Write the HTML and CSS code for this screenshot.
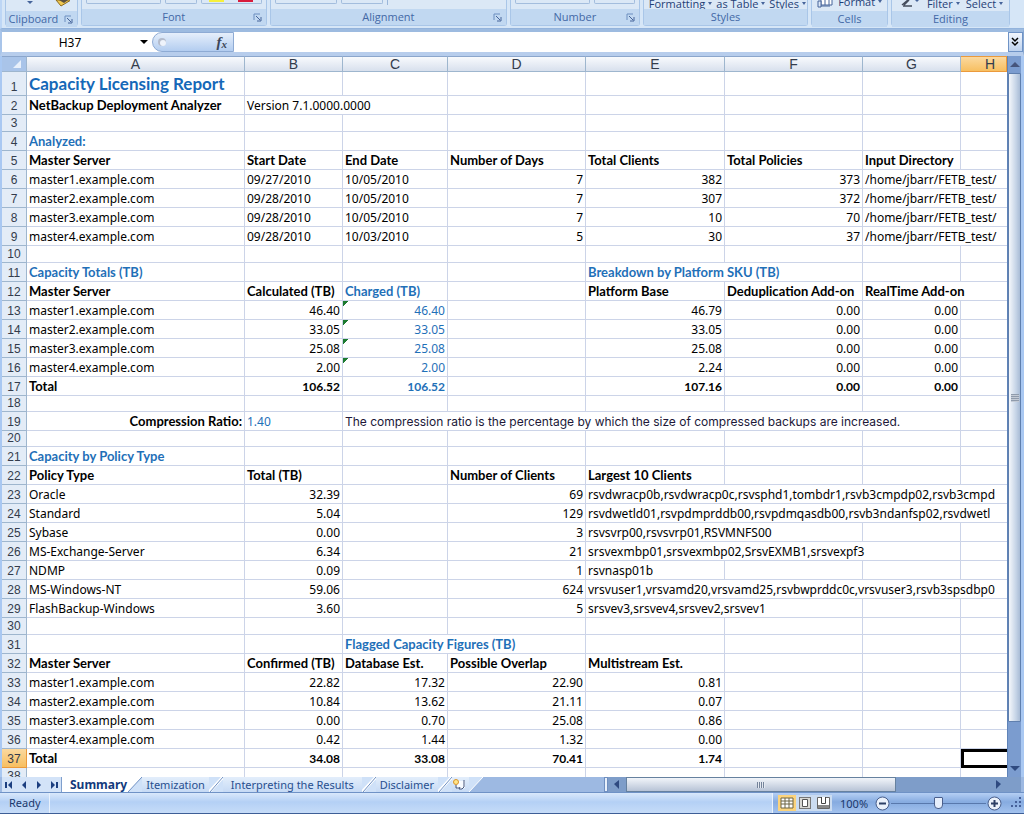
FILE: index.html
```html
<!DOCTYPE html>
<html lang="en">
<head>
<meta charset="utf-8">
<title>Capacity Licensing Report</title>
<link rel="stylesheet" href="styles.css">
</head>
<body>
<div class="app">
  <header class="ribbon">
    <section class="group clipboard">
      <div class="tools">
        <svg width="60" height="11" viewBox="0 0 60 11"><path d="M17 1h6l-3 3z" fill="#46649a"/><path d="M46 0l5 6 10-6z" fill="#f0c850" stroke="#8a6a20"/><path d="M49 0l5 3 4-3z" fill="#5a5040"/></svg>
      </div>
      <h2>Clipboard<button class="launch" aria-label="Clipboard options"><svg width="9" height="9"><path d="M1 7V1h6" fill="none" stroke="#6d8fc0"/><path d="M3 3l4 4M8 4v4H4" fill="none" stroke="#46649a"/></svg></button></h2>
    </section>
    <section class="group font">
      <div class="tools"><span class="box w76"></span><span class="box w32"></span><span class="box w62"><i class="swatch yellow"></i><i class="swatch red"></i></span></div>
      <h2>Font<button class="launch" aria-label="Font options"><svg width="9" height="9"><path d="M1 7V1h6" fill="none" stroke="#6d8fc0"/><path d="M3 3l4 4M8 4v4H4" fill="none" stroke="#46649a"/></svg></button></h2>
    </section>
    <section class="group alignment">
      <div class="tools"><span class="box w62"></span><span class="box w42"></span><span class="rule"></span></div>
      <h2>Alignment<button class="launch" aria-label="Alignment options"><svg width="9" height="9"><path d="M1 7V1h6" fill="none" stroke="#6d8fc0"/><path d="M3 3l4 4M8 4v4H4" fill="none" stroke="#46649a"/></svg></button></h2>
    </section>
    <section class="group number">
      <div class="tools"><span class="box w76"></span><span class="box w42"></span></div>
      <h2>Number<button class="launch" aria-label="Number options"><svg width="9" height="9"><path d="M1 7V1h6" fill="none" stroke="#6d8fc0"/><path d="M3 3l4 4M8 4v4H4" fill="none" stroke="#46649a"/></svg></button></h2>
    </section>
    <section class="group styles">
      <div class="tools"><button class="drop">Formatting</button><button class="drop">as Table</button><button class="drop">Styles</button></div>
      <h2>Styles</h2>
    </section>
    <section class="group cells">
      <div class="tools"><svg width="17" height="11" viewBox="0 0 17 11"><path d="M4 0v5h11V0M8 0v5M12 0v5" fill="#fff" stroke="#46649a"/><path d="M1 1h3v6H1zM4 6h9" fill="#dce8f8" stroke="#46649a"/></svg><button class="drop">Format</button></div>
      <h2>Cells</h2>
    </section>
    <section class="group editing">
      <div class="tools"><svg width="24" height="11" viewBox="0 0 24 11"><path d="M5 5l6-5M6 6h9M7 5l5-5" fill="none" stroke="#444c5c" stroke-width="1.5"/><path d="M18 0h4l-2 2z" fill="#46649a"/></svg><button class="drop">Filter</button><button class="drop">Select</button></div>
      <h2>Editing</h2>
    </section>
  </header>

  <div class="formula-bar">
    <input class="name-box" aria-label="Name box" value="H37">
    <button class="name-drop" aria-label="Open name list"><svg width="8" height="4"><path d="M0 0h8L4 4z" fill="#000"/></svg></button>
    <div class="fx">
      <svg width="12" height="12"><circle cx="5" cy="6" r="4" fill="#b4bccc"/><circle cx="6" cy="7" r="3" fill="#eef3fb"/></svg>
      <button class="fx-button" aria-label="Insert function">f<small>x</small></button>
    </div>
    <input class="formula" aria-label="Formula" value="">
    <button class="expand" aria-label="Expand formula bar"><svg width="9" height="10"><path d="M1 1l3 3 3-3M1 5l3 3 3-3" fill="none" stroke="#000" stroke-width="1.5"/></svg></button>
  </div>

  <main class="workspace">
    <div class="sheet">
      <table>
        <colgroup><col class="c-row"><col class="c-a"><col class="c-b"><col class="c-c"><col class="c-d"><col class="c-e"><col class="c-f"><col class="c-g"><col></colgroup>
        <thead><tr><th class="corner"><svg width="8" height="8"><path d="M8 0v8H0z" fill="#e8f0fb"/></svg></th><th>A</th><th>B</th><th>C</th><th>D</th><th>E</th><th>F</th><th>G</th><th class="current col-h">H</th></tr></thead>
        <tbody>
          <tr class="tall"><th>1</th><td class="title">Capacity Licensing Report</td><td></td><td></td><td></td><td></td><td></td><td></td><td></td></tr>
          <tr><th>2</th><td class="b">NetBackup Deployment Analyzer</td><td colspan="2">Version 7.1.0000.0000</td><td></td><td></td><td></td><td></td><td></td></tr>
          <tr class="short"><th>3</th><td></td><td></td><td></td><td></td><td></td><td></td><td></td><td></td></tr>
          <tr><th>4</th><td class="b blue">Analyzed:</td><td></td><td></td><td></td><td></td><td></td><td></td><td></td></tr>
          <tr class="b"><th>5</th><td>Master Server</td><td>Start Date</td><td>End Date</td><td>Number of Days</td><td>Total Clients</td><td>Total Policies</td><td>Input Directory</td><td></td></tr>
          <tr><th>6</th><td>master1.example.com</td><td>09/27/2010</td><td>10/05/2010</td><td class="n">7</td><td class="n">382</td><td class="n">373</td><td colspan="2">/home/jbarr/FETB_test/</td></tr>
          <tr><th>7</th><td>master2.example.com</td><td>09/28/2010</td><td>10/05/2010</td><td class="n">7</td><td class="n">307</td><td class="n">372</td><td colspan="2">/home/jbarr/FETB_test/</td></tr>
          <tr><th>8</th><td>master3.example.com</td><td>09/28/2010</td><td>10/05/2010</td><td class="n">7</td><td class="n">10</td><td class="n">70</td><td colspan="2">/home/jbarr/FETB_test/</td></tr>
          <tr><th>9</th><td>master4.example.com</td><td>09/28/2010</td><td>10/03/2010</td><td class="n">5</td><td class="n">30</td><td class="n">37</td><td colspan="2">/home/jbarr/FETB_test/</td></tr>
          <tr class="short"><th>10</th><td></td><td></td><td></td><td></td><td></td><td></td><td></td><td></td></tr>
          <tr class="b blue"><th>11</th><td>Capacity Totals (TB)</td><td></td><td></td><td></td><td colspan="2">Breakdown by Platform SKU (TB)</td><td></td><td></td></tr>
          <tr class="b"><th>12</th><td>Master Server</td><td>Calculated (TB)</td><td class="blue">Charged (TB)</td><td></td><td>Platform Base</td><td>Deduplication Add-on</td><td colspan="2">RealTime Add-on</td></tr>
          <tr><th>13</th><td>master1.example.com</td><td class="n">46.40</td><td class="n blue flag">46.40</td><td></td><td class="n">46.79</td><td class="n">0.00</td><td class="n">0.00</td><td></td></tr>
          <tr><th>14</th><td>master2.example.com</td><td class="n">33.05</td><td class="n blue flag">33.05</td><td></td><td class="n">33.05</td><td class="n">0.00</td><td class="n">0.00</td><td></td></tr>
          <tr><th>15</th><td>master3.example.com</td><td class="n">25.08</td><td class="n blue flag">25.08</td><td></td><td class="n">25.08</td><td class="n">0.00</td><td class="n">0.00</td><td></td></tr>
          <tr><th>16</th><td>master4.example.com</td><td class="n">2.00</td><td class="n blue flag">2.00</td><td></td><td class="n">2.24</td><td class="n">0.00</td><td class="n">0.00</td><td></td></tr>
          <tr class="b"><th>17</th><td>Total</td><td class="n">106.52</td><td class="n blue">106.52</td><td></td><td class="n">107.16</td><td class="n">0.00</td><td class="n">0.00</td><td></td></tr>
          <tr class="shorter"><th>18</th><td></td><td></td><td></td><td></td><td></td><td></td><td></td><td></td></tr>
          <tr><th>19</th><td class="label b">Compression Ratio:</td><td class="blue">1.40</td><td colspan="5" class="note">The compression ratio is the percentage by which the size of compressed backups are increased.</td><td></td></tr>
          <tr class="shorter"><th>20</th><td></td><td></td><td></td><td></td><td></td><td></td><td></td><td></td></tr>
          <tr><th>21</th><td class="b blue">Capacity by Policy Type</td><td></td><td></td><td></td><td></td><td></td><td></td><td></td></tr>
          <tr class="b"><th>22</th><td>Policy Type</td><td>Total (TB)</td><td></td><td>Number of Clients</td><td>Largest 10 Clients</td><td></td><td></td><td></td></tr>
          <tr><th>23</th><td>Oracle</td><td class="n">32.39</td><td></td><td class="n">69</td><td colspan="4">rsvdwracp0b,rsvdwracp0c,rsvsphd1,tombdr1,rsvb3cmpdp02,rsvb3cmpd</td></tr>
          <tr><th>24</th><td>Standard</td><td class="n">5.04</td><td></td><td class="n">129</td><td colspan="4">rsvdwetld01,rsvpdmprddb00,rsvpdmqasdb00,rsvb3ndanfsp02,rsvdwetl</td></tr>
          <tr><th>25</th><td>Sybase</td><td class="n">0.00</td><td></td><td class="n">3</td><td colspan="2">rsvsvrp00,rsvsvrp01,RSVMNFS00</td><td></td><td></td></tr>
          <tr><th>26</th><td>MS-Exchange-Server</td><td class="n">6.34</td><td></td><td class="n">21</td><td colspan="3">srsvexmbp01,srsvexmbp02,SrsvEXMB1,srsvexpf3</td><td></td></tr>
          <tr><th>27</th><td>NDMP</td><td class="n">0.09</td><td></td><td class="n">1</td><td>rsvnasp01b</td><td></td><td></td><td></td></tr>
          <tr><th>28</th><td>MS-Windows-NT</td><td class="n">59.06</td><td></td><td class="n">624</td><td colspan="4">vrsvuser1,vrsvamd20,vrsvamd25,rsvbwprddc0c,vrsvuser3,rsvb3spsdbp0</td></tr>
          <tr><th>29</th><td>FlashBackup-Windows</td><td class="n">3.60</td><td></td><td class="n">5</td><td colspan="2">srsvev3,srsvev4,srsvev2,srsvev1</td><td></td><td></td></tr>
          <tr class="short"><th>30</th><td></td><td></td><td></td><td></td><td></td><td></td><td></td><td></td></tr>
          <tr><th>31</th><td></td><td></td><td colspan="2" class="b blue">Flagged Capacity Figures (TB)</td><td></td><td></td><td></td><td></td></tr>
          <tr class="b"><th>32</th><td>Master Server</td><td>Confirmed (TB)</td><td>Database Est.</td><td>Possible Overlap</td><td>Multistream Est.</td><td></td><td></td><td></td></tr>
          <tr><th>33</th><td>master1.example.com</td><td class="n">22.82</td><td class="n">17.32</td><td class="n">22.90</td><td class="n">0.81</td><td></td><td></td><td></td></tr>
          <tr><th>34</th><td>master2.example.com</td><td class="n">10.84</td><td class="n">13.62</td><td class="n">21.11</td><td class="n">0.07</td><td></td><td></td><td></td></tr>
          <tr><th>35</th><td>master3.example.com</td><td class="n">0.00</td><td class="n">0.70</td><td class="n">25.08</td><td class="n">0.86</td><td></td><td></td><td></td></tr>
          <tr><th>36</th><td>master4.example.com</td><td class="n">0.42</td><td class="n">1.44</td><td class="n">1.32</td><td class="n">0.00</td><td></td><td></td><td></td></tr>
          <tr class="b"><th class="current">37</th><td>Total</td><td class="n">34.08</td><td class="n">33.08</td><td class="n">70.41</td><td class="n">1.74</td><td></td><td></td><td class="selected"></td></tr>
          <tr class="short"><th>38</th><td></td><td></td><td></td><td></td><td></td><td></td><td></td><td></td></tr>
        </tbody>
      </table>
    </div>
    <div class="vscroll">
      <button aria-label="Scroll up"><svg width="10" height="5"><path d="M5 0l5 5H0z" fill="#46557c"/></svg></button>
      <div class="vthumb"><i></i></div>
      <div class="vtrack"></div>
      <button aria-label="Scroll down"><svg width="10" height="5"><path d="M0 0h10L5 5z" fill="#2f4a80"/></svg></button>
    </div>
  </main>

  <nav class="tab-bar">
    <div class="tab-nav">
      <button aria-label="First sheet"><svg width="8" height="8"><path d="M1 1v6" stroke="#1c3f80" stroke-width="2"/><path d="M7 0v8L3 4z" fill="#1c3f80"/></svg></button>
      <button aria-label="Previous sheet"><svg width="8" height="8"><path d="M6 0v8L2 4z" fill="#1c3f80"/></svg></button>
      <button aria-label="Next sheet"><svg width="8" height="8"><path d="M2 0v8l4-4z" fill="#1c3f80"/></svg></button>
      <button aria-label="Last sheet"><svg width="8" height="8"><path d="M7 1v6" stroke="#1c3f80" stroke-width="2"/><path d="M1 0v8l4-4z" fill="#1c3f80"/></svg></button>
    </div>
    <button class="tab active">Summary</button>
    <svg class="slant" width="14" height="15"><path d="M0 0h14v15H0z" fill="#cfe1f8"/><path d="M0 0h14L0 15z" fill="#fff"/><path d="M14 0L0 15" stroke="#6f91c4"/></svg>
    <button class="tab">Itemization</button>
    <svg class="slant" width="14" height="15"><path d="M0 0h14v15H0z" fill="#cfe1f8"/><path d="M14 0L0 15" stroke="#fff" stroke-width="3"/><path d="M14 0L1 15" stroke="#6f91c4"/></svg>
    <button class="tab wide">Interpreting the Results</button>
    <svg class="slant" width="14" height="15"><path d="M0 0h14v15H0z" fill="#cfe1f8"/><path d="M14 0L0 15" stroke="#fff" stroke-width="3"/><path d="M14 0L1 15" stroke="#6f91c4"/></svg>
    <button class="tab">Disclaimer</button>
    <svg class="slant" width="14" height="15"><path d="M0 0h14v15H0z" fill="#cfe1f8"/><path d="M14 0L0 15" stroke="#fff" stroke-width="3"/><path d="M14 0L1 15" stroke="#6f91c4"/></svg>
    <button class="tab new" aria-label="Insert worksheet"><svg width="15" height="13"><path d="M4 3h9v7l-4 1H5z" fill="#f8fbff"/><path d="M12 2v7l-2 2H7l1-2M4 7v3h4" fill="none" stroke="#46577c"/><circle cx="4" cy="4" r="2.5" fill="#ffe68a" stroke="#d8932c"/></svg></button>
    <svg class="slant" width="14" height="15"><path d="M0 0h14L0 15z" fill="#cfe1f8"/><path d="M14 0L0 15" stroke="#fff"/></svg>
    <div class="hscroll">
      <i class="splitter"></i>
      <button aria-label="Scroll left"><svg width="5" height="9"><path d="M5 0v9L0 4z" fill="#2f4a80"/></svg></button>
      <div class="hthumb"><i></i></div>
      <button class="right" aria-label="Scroll right"><svg width="5" height="9"><path d="M0 0v9l5-5z" fill="#2f4a80"/></svg></button>
    </div>
  </nav>

  <footer class="status">
    <span class="ready">Ready</span>
    <div class="controls">
      <div class="views">
        <button class="on" aria-label="Normal view"><svg width="14" height="12"><path d="M1 1h12v10H1zM1 4h12M1 7h12M5 1v10M9 1v10" fill="#fff" stroke="#6c6444"/></svg></button>
        <button aria-label="Page layout view"><svg width="12" height="12"><path d="M0 0h12v12H0z" fill="#777"/><path d="M1 1h10v10H1z" fill="#d8d8d4"/><path d="M3.500 2.500h5v7h-5z" fill="#fff" stroke="#555"/></svg></button>
        <button aria-label="Page break view"><svg width="13" height="12"><path d="M.5.5h12v11H.5z" fill="#fff" stroke="#666"/><path d="M1 8h11v3H1z" fill="#888"/><path d="M4.500 0v6.500h4V0" fill="#fff" stroke="#444"/></svg></button>
      </div>
      <span class="percent">100%</span>
      <button class="round" aria-label="Zoom out"><svg width="15" height="15"><circle cx="7.5" cy="7.5" r="6.5" fill="#eaf1fb" stroke="#4a5f8c"/><path d="M4 7.5h7" stroke="#2c3f66" stroke-width="2"/></svg></button>
      <input class="zoom" type="range" min="10" max="190" value="100" aria-label="Zoom">
      <button class="round" aria-label="Zoom in"><svg width="15" height="15"><circle cx="7.5" cy="7.5" r="6.5" fill="#eaf1fb" stroke="#4a5f8c"/><path d="M4 7.5h7M7.5 4v7" stroke="#2c3f66" stroke-width="2"/></svg></button>
      <svg class="grip" width="12" height="12"><path d="M8 0h2v2H8zM8 4h2v2H8zM4 4h2v2H4zM8 8h2v2H8zM4 8h2v2H4zM0 8h2v2H0z" fill="#45609a"/></svg>
    </div>
  </footer>
</div>
</body>
</html>
```
FILE: styles.css
```css
* { box-sizing: border-box; }
body { margin: 0; font-family: "Noto Sans", sans-serif; font-size: 11px; background: #bdd6f5; }
button { border: 0; padding: 0; margin: 0; background: none; font: inherit; color: inherit; display: flex; align-items: center; justify-content: center; }
svg { display: block; flex: none; }
.app { height: 100vh; display: flex; flex-direction: column; overflow: hidden; border-bottom: 1px solid #3d5e96; }

.ribbon { flex: none; height: 29px; display: flex; gap: 3px; padding: 0 14px 2px 3px; background: #d6e6f7; border-bottom: 1px solid #93b3dc; border-left: 2px solid #bdd6f5; font-family: "Open Sans", sans-serif; }
.group { display: flex; flex-direction: column; border: 1px solid #a9c6e8; border-top: 0; border-radius: 0 0 3px 3px; background: #dbe8f6; min-width: 0; }
.clipboard { flex: 72; }
.font { flex: 187; }
.alignment { flex: 239; }
.number { flex: 130; }
.styles { flex: 166; }
.cells { flex: 76; }
.editing { flex: 119; }
.tools { height: 11px; display: flex; gap: 4px; padding: 0 4px; color: #1f3f77; }
.group h2 { flex: 1; margin: 0; font-size: 11px; line-height: 16px; font-weight: 400; color: #4368a6; text-align: center; background: #c1d8f1; display: grid; grid-template-columns: 16px 1fr 16px; }
.group h2::before { content: ""; }
.clipboard h2 { grid-template-columns: 0 1fr 16px; }
.launch { width: 16px; }
.box { height: 4px; border: 1px solid #a3bddd; border-top: 0; border-radius: 0 0 2px 2px; display: flex; justify-content: space-around; }
.w76 { width: 76px; }
.w32 { width: 32px; }
.w42 { width: 42px; }
.w62 { width: 62px; }
.swatch { width: 15px; height: 2px; }
.yellow { background: #f6f03c; }
.red { background: #d81c3c; }
.rule { width: 1px; height: 5px; background: #9ab6da; }
.drop { height: 7px; line-height: 7px; gap: 3px; white-space: nowrap; }
.drop::after { content: ""; border: 2px solid transparent; border-top: 3px solid #46649a; border-bottom: 0; }
.styles .tools { padding-left: 5px; }
.cells .tools { gap: 4px; padding-left: 5px; }
.cells .drop { height: 3px; line-height: 3px; }
.editing .tools { gap: 6px; padding-left: 5px; }

.formula-bar { flex: none; height: 27px; display: flex; border: 1px solid; border-width: 3px 1px 4px 2px; border-color: #9dbbe0 #86a6d0 #b7cdec #a9c5ea; background: #fff; }
.name-box { width: 136px; border: 0; padding: 0; text-align: center; font-family: "Noto Sans", sans-serif; font-size: 12px; background: #fff; }
.name-drop { width: 12px; }
.fx { width: 82px; margin-left: 2px; display: flex; align-items: center; justify-content: space-between; padding: 0 6px 0 4px; border: 1px solid #8eabd4; border-radius: 10px 0 0 10px; background: linear-gradient(#e6effb, #b3cdf0); }
.fx-button { font-family: "Liberation Serif", serif; font-style: italic; font-weight: 700; font-size: 15px; line-height: 16px; color: #3c4658; }
.fx-button small { font-size: 11px; padding-top: 3px; }
.formula { flex: 1; border: 0; min-width: 0; padding: 0 4px; }
.expand { width: 15px; border: 1px solid #6f93c6; background: linear-gradient(#f1f6fd, #bdd2ef); }

.workspace { flex: 1; min-height: 0; display: flex; padding: 0 3px 0 2px; background: #a9c8f2; }
.sheet { flex: 1; min-width: 0; overflow: hidden; background: #fff; }
table { width: 100%; table-layout: fixed; border-collapse: separate; border-spacing: 0; font-family: "Noto Sans", sans-serif; font-size: 12px; color: #000; }
.c-row { width: 25px; }
.c-a { width: 218px; }
.c-b, .c-g { width: 98px; }
.c-c { width: 105px; }
.c-d, .c-f { width: 138px; }
.c-e { width: 139px; }
tr { height: 19px; }
tr.tall { height: 24px; }
tr.short { height: 17px; }
tr.shorter { height: 16px; }
td, th { padding: 0 2px; border-right: 1px solid #ccd4e8; border-bottom: 1px solid #ccd4e8; white-space: nowrap; overflow: hidden; line-height: 15px; }
th { font-family: "Liberation Sans", sans-serif; font-weight: 400; color: #333c4c; }
tbody th { padding: 0; font-size: 12px; background: #e3ecf7; border-color: #9eb6ce; vertical-align: bottom; }
thead tr { height: 16px; }
thead th { font-size: 14px; line-height: 14px; background: linear-gradient(#f8fafd, #d8e0ed); border-color: #9eb6ce; border-top: 1px solid #8ba6cc; }
thead .corner { background: #a9c4e9; padding: 0 0 0 11px; }
th.current, thead th.current { background: linear-gradient(#fbd99f, #f7bf61); border-color: #eb9a3c; }
thead .col-h { padding-left: 15px; }
td:last-child { border-right: 0; }
.b td, td.b { font-family: Lato, sans-serif; font-size: 13px; font-weight: 700; }
.blue td, td.blue { color: #1f70b8; }
.n, .label { text-align: right; }
.b td.n { font-size: 12px; }
td.title { font-family: Lato, sans-serif; font-size: 17px; line-height: 22px; font-weight: 700; color: #1568b8; }
td.note { font-family: Inter, sans-serif; font-size: 12px; color: #201838; }
.flag { background: linear-gradient(135deg, #1c7a30 4px, transparent 4px); }
.selected { border: 3px solid #000; }

.vscroll { width: 14px; display: flex; flex-direction: column; background: #7b9ccf; border-left: 1px solid #5f83b8; }
.vscroll button { height: 17px; }
.vthumb { flex: 650; border: 1px solid #5f7fae; border-radius: 1px; background: linear-gradient(90deg, #f4f7fb, #c8d6e8 60%, #a9bcd6); display: flex; align-items: center; justify-content: center; }
.vthumb i { width: 8px; height: 8px; background: repeating-linear-gradient(#8f9bac 0 1px, #c4cbd6 1px 2px); }
.vtrack { flex: 38; }

.tab-bar { flex: none; height: 16px; display: flex; background: #9db9e2; border-bottom: 1px solid #6f92c6; padding-left: 2px; padding-right: 3px; }
.tab-nav { width: 60px; display: flex; justify-content: space-around; background: #d3e3f8; border-right: 1px solid #7f9fcd; }
.tab { font-size: 11px; line-height: 15px; color: #284f8f; background: linear-gradient(#e3eefb, #c6daf5); padding: 0 4px; white-space: nowrap; }
.tab.active { font-size: 12px; font-weight: 700; color: #123a7c; background: #fff; padding: 0 1px 0 8px; }
.tab.wide { padding: 0 8px; }
.tab.new { padding: 0 2px 0 0; }
.hscroll { flex: 1; min-width: 0; display: grid; grid-template-columns: 4px 18px 270px 1fr; margin-left: 121px; background: #7e9dc9; }
.splitter { background: #e8f0fb; border: 1px solid #6f8fc0; }
.hthumb { border: 1px solid #66819f; background: linear-gradient(#f2f5fa, #b7c3d6); display: flex; align-items: center; justify-content: center; }
.hthumb i { width: 8px; height: 6px; background: repeating-linear-gradient(90deg, #74839a 0 1px, #e4e9f1 1px 2px); }
.hscroll .right { justify-content: flex-end; padding-right: 20px; }

.status { flex: none; height: 20px; display: flex; justify-content: space-between; color: #1a386c; background: linear-gradient(#d9e8fb, #b4d0f5 45%, #c6dcf8); }
.ready { line-height: 20px; padding: 0 8px 0 9px; border-right: 1px solid #e8f1fc; }
.controls { display: flex; align-items: center; padding: 0 1px 0 5px; border-left: 1px solid #e8f1fc; background: linear-gradient(#b5cff4, #86abe0 45%, #a3c2ee); }
.views { display: flex; margin-right: 8px; }
.views button { width: 18px; height: 16px; background: #cbdcf1; }
.views .on { background: #fbd37c; }
.percent { width: 34px; }
.round { width: 17px; }
.zoom { appearance: none; width: 95px; height: 16px; margin: 0; background: linear-gradient(#5878ac, #5878ac) center / 100% 1px no-repeat; }
.zoom::-webkit-slider-thumb { appearance: none; width: 9px; height: 12px; border: 1px solid #4a5f8c; border-radius: 1px 1px 4px 4px; background: #e6eefb; }
.grip { margin-left: 8px; }
```
